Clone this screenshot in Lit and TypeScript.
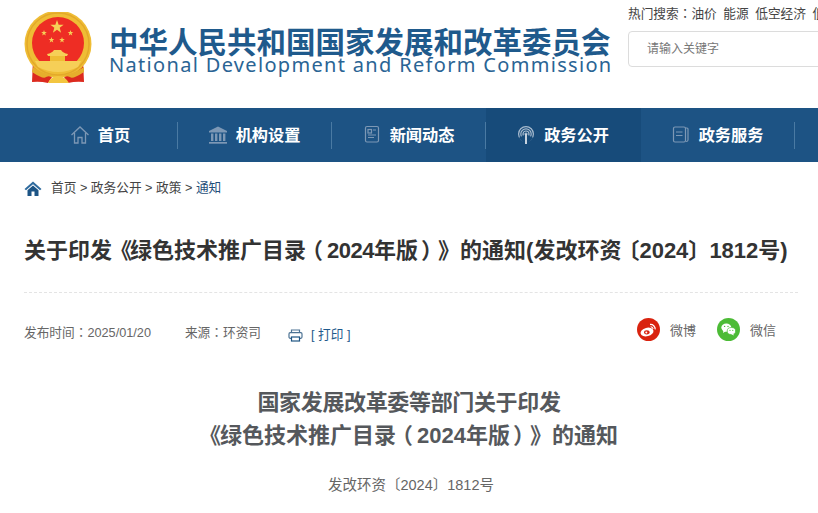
import { LitElement, html, css, svg } from "lit";
import { customElement } from "lit/decorators.js";

const star = (cx: number, cy: number, r: number, rot = 0) => {
  const pts: string[] = [];
  for (let i = 0; i < 10; i++) {
    const rad = i % 2 ? r * 0.4 : r;
    const a = -Math.PI / 2 + (i * Math.PI) / 5 + rot;
    pts.push(`${(cx + rad * Math.cos(a)).toFixed(2)},${(cy + rad * Math.sin(a)).toFixed(2)}`);
  }
  return svg`<polygon points=${pts.join(" ")} fill="#f6cf57"/>`;
};

const emblem = html`<svg class="emblem" width="70" height="74" viewBox="0 0 70 74">
  <path d="M9 48 L8 70 Q16 69 24 71 L30 62 H38 L44 71 Q52 69 60 70 L59 48 Z" fill="#dc2a1f"/>
  <circle cx="34" cy="32" r="33.5" fill="#efbd35"/>
  <circle cx="34" cy="32" r="31" fill="none" stroke="#e3a92a" stroke-width="1.5"/>
  <circle cx="34" cy="31" r="26" fill="#ee2d24"/>
  ${star(33, 15, 7)}${star(20, 21, 3)}${star(46.5, 21, 3)}${star(27.5, 28, 3)}${star(38, 28, 3)}
  <path d="M23 42 Q28 41 30 38 H37 Q39 41 44 42 L43 44 H24 Z" fill="#f6cf57"/>
  <rect x="26" y="44" width="15" height="5" fill="#efbd35"/>
  <path d="M11 49 H57 L54 55 Q44 60 34 60 Q24 60 14 55 Z" fill="#f6cf57"/>
  <path d="M9 55 Q34 72 60 55 L60 60 Q48 68 46 65 Q34 60 22 65 Q20 68 8 60 Z" fill="#e6ae2c"/>
  <path d="M24 71 Q27 64 34 64 Q41 64 45 71 Z" fill="#f3c640"/>
</svg>`;

const homeIcon = html`<svg class="ni" width="20" height="20" viewBox="0 0 20 20" fill="none" stroke="#7d98b5" stroke-width="1.3">
  <path d="M1.5 10 L10 2 L18.5 10"/><path d="M4.5 8 V18 H8 V12.5 H12 V18 H15.5 V8"/></svg>`;
const bankIcon = html`<svg class="ni" width="20" height="20" viewBox="0 0 20 20" fill="#7d98b5">
  <path d="M10 1.5 L19 6 V7.5 H1 V6 Z"/><rect x="3" y="8.5" width="2.4" height="7.5"/><rect x="7" y="8.5" width="2.4" height="7.5"/><rect x="11" y="8.5" width="2.4" height="7.5"/><rect x="15" y="8.5" width="2.4" height="7.5"/><rect x="1" y="17" width="18" height="1.7"/></svg>`;
const newsIcon = html`<svg class="ni" width="20" height="20" viewBox="0 0 20 20" fill="none" stroke="#7d98b5" stroke-width="1.2">
  <rect x="3.5" y="1.5" width="13" height="15.5" rx="1.5"/><rect x="6" y="4.5" width="3.5" height="3.5"/><path d="M11 5 H14 M6 10 H14 M6 12.5 H12"/></svg>`;
const signalIcon = html`<svg class="ni" width="20" height="20" viewBox="0 0 20 20" fill="none" stroke="#a9bccf" stroke-width="1.2">
  <circle cx="10" cy="9" r="7.4"/><circle cx="10" cy="9" r="5.2"/><circle cx="10" cy="9" r="3"/><circle cx="10" cy="9" r="1" fill="#a9bccf"/><path d="M2.5 13 L10 9 L17.5 13 L10 20 Z" fill="#174b7a" stroke="none"/><path d="M10 9 V19" stroke-width="1.8" stroke="#dbe3ea"/></svg>`;
const bookIcon = html`<svg class="ni" width="20" height="20" viewBox="0 0 20 20" fill="none" stroke="#7d98b5" stroke-width="1.2">
  <rect x="2.5" y="2" width="12" height="15" rx="1.5"/><path d="M14.5 3 H16 Q17 3 17 4 V15 Q17 16.5 15 16.5"/><path d="M5 7 H11.5 M5 10.5 H11.5"/></svg>`;

const crumbHome = html`<svg class="crumb-home" width="18" height="15" viewBox="0 0 18 15">
  <path d="M9 0.5 L0.5 8 L2 9.3 L9 3.2 L16 9.3 L17.5 8 Z" fill="#2f6b9e"/><path d="M3.5 9.3 L9 4.6 L14.5 9.3 V15 H10.5 V10.5 H7.5 V15 H3.5 Z" fill="#1c5485"/></svg>`;
const printIcon = html`<svg class="print-ic" width="15" height="13" viewBox="0 0 15 13" fill="none" stroke="#4d7394" stroke-width="1.2">
  <path d="M3.5 3.5 V1 H11.5 V3.5"/><rect x="1" y="3.7" width="13" height="5.6" rx="1.2"/><rect x="3.5" y="8" width="8" height="4" fill="#fff" stroke="#1f5583"/></svg>`;
const weiboIcon = html`<svg width="23" height="23" viewBox="0 0 23 23"><circle cx="11.5" cy="11.5" r="11.5" fill="#d9230f"/>
  <ellipse cx="10" cy="14" rx="6.6" ry="4.2" fill="#fff" transform="rotate(-14 10 14)"/><ellipse cx="9.8" cy="14.3" rx="2.8" ry="2.1" fill="#d9230f"/><circle cx="9.3" cy="14.5" r="1" fill="#fff"/>
  <path d="M13 6.5 A4.6 4.6 0 0 1 18.2 11.4" fill="none" stroke="#fff" stroke-width="1.3"/><path d="M13.6 8.8 A2.3 2.3 0 0 1 16 11" fill="none" stroke="#fff" stroke-width="1.1"/></svg>`;
const wechatIcon = html`<svg width="23" height="23" viewBox="0 0 23 23"><circle cx="11.5" cy="11.5" r="11.5" fill="#4cbb36"/>
  <ellipse cx="9.3" cy="9.6" rx="5" ry="4.2" fill="#fff"/><path d="M6.5 12 L6 15 L9 13 Z" fill="#fff"/><circle cx="7.6" cy="8.4" r=".7" fill="#4cbb36"/><circle cx="11" cy="8.4" r=".7" fill="#4cbb36"/>
  <ellipse cx="14.4" cy="13" rx="4.2" ry="3.5" fill="#fff" stroke="#4cbb36" stroke-width=".7"/><path d="M16 15.6 L17 17.5 L14.4 16.2 Z" fill="#fff"/><circle cx="13" cy="12.3" r=".6" fill="#4cbb36"/><circle cx="15.8" cy="12.3" r=".6" fill="#4cbb36"/></svg>`;

const navItems = [
  { t: "首页", i: homeIcon },
  { t: "机构设置", i: bankIcon },
  { t: "新闻动态", i: newsIcon },
  { t: "政务公开", i: signalIcon, active: true },
  { t: "政务服务", i: bookIcon },
];

const colon = html`<span class="tc">：</span>`;
const titleMid = html`<span class="lq">《</span>绿色技术推广目录<span class="lp">（</span><span class="n">2024</span>年版<span class="rp">）</span>》的通知`;

@customElement("app-root")
export class AppRoot extends LitElement {
  static styles = css`
    :host {
      display: block;
      width: 818px;
      height: 513px;
      overflow: hidden;
      background: #fff;
      font-family: "Liberation Sans", "Noto Sans CJK SC", sans-serif;
      color: #333;
    }
    .tc { font-family: "Noto Sans CJK TC", sans-serif; line-height: 0; }
    .lq { margin-left: -2px; margin-right: -2px; }
    .lp { margin-left: -5px; margin-right: 4px; }
    .rp { margin-left: 3px; margin-right: 6px; }
    .n { letter-spacing: -.5px; }
    .lb { margin-left: -4px; }
    .rb { margin-right: -1px; }
    .head { height: 108px; display: flex; padding-left: 24px; box-sizing: border-box; }
    .emblem { margin-top: 12px; flex: none; }
    .brand { margin-left: 15px; width: 519px; flex: none; padding-top: 23px; }
    .cn { font-size: 29.5px; line-height: 34px; font-weight: 700; color: #1f5a8c; white-space: nowrap; font-family: "Noto Sans CJK SC", sans-serif; }
    .en { font-size: 20px; line-height: 20px; letter-spacing: 1.32px; color: #2a6494; white-space: nowrap; margin-top: -2px; font-family: "Noto Sans", sans-serif; }
    .right { flex: none; width: 300px; padding-top: 6px; }
    .hot { font-size: 12.7px; line-height: 16px; color: #444; white-space: nowrap; }
    .hot .w { margin-right: 3px; }
    .search { margin-top: 9px; height: 36px; box-sizing: border-box; border: 1px solid #dcdcdc; border-radius: 4px; font-size: 12px; line-height: 34px; padding-left: 18px; color: #777; }
    nav { height: 54px; background: #1d5384; display: flex; padding-left: 24px; }
    .item { width: 154px; flex: none; box-sizing: border-box; padding-right: 2px; display: flex; align-items: center; justify-content: center; gap: 8px; position: relative; color: #fff; font-size: 16.2px; font-weight: 700; white-space: nowrap; font-family: "Noto Sans CJK SC", sans-serif; }
    .item span { margin-top: -2px; }
    .item::after { content: ""; position: absolute; right: 0; top: 14px; height: 27px; width: 1px; background: #4a7aa3; }
    .item.active { background: #174b7a; width: 155px; }
    .item.active::after { display: none; }
    .ni { flex: none; }
    .crumb { display: flex; align-items: center; padding: 18px 0 0 24px; height: 17px; font-size: 12.7px; line-height: 17px; color: #444; white-space: pre; }
    .crumb-home { margin-right: 9px; }
    .crumb b { font-weight: 400; color: #1f4f7a; }
    h1 { margin: 38px 0 0 24px; font-size: 22px; line-height: 32px; font-weight: 700; color: #333; white-space: nowrap; }
    .rule { margin: 25px 20px 0 24px; border-top: 1px dashed #e4e4e4; }
    .meta { display: flex; align-items: center; margin: 23px 0 0 24px; height: 30px; font-size: 12.7px; color: #666; position: relative; }
    .src { margin-left: 34px; }
    .print-ic { margin-left: 27px; margin-top: 8px; }
    .print { margin-left: 8px; color: #1f5a8c; margin-top: 4px; }
    .share { margin-left: auto; margin-right: 42px; display: flex; gap: 21px; margin-top: -3px; font-size: 13px; }
    .share span { display: flex; align-items: center; gap: 10px; width: 59px; }
    .share svg { flex: none; }
    h2 { margin: 40px 0 0; text-align: center; font-size: 22px; line-height: 33px; font-weight: 700; color: #55585c; }
    h2 .lq { margin-left: -1px; margin-right: -1px; }
    h2 .n { letter-spacing: 0; }
    h2 .tight { letter-spacing: -.35px; }
    .doc { margin-top: 24px; padding-left: 4px; text-align: center; font-size: 14.5px; line-height: 18px; color: #666; }
  `;
  render() {
    return html`
      <div class="head">
        ${emblem}
        <div class="brand">
          <div class="cn">中华人民共和国国家发展和改革委员会</div>
          <div class="en">National Development and Reform Commission</div>
        </div>
        <div class="right">
          <div class="hot">热门搜索${colon}<span class="w">油价</span> <span class="w">能源</span> <span class="w">低空经济</span> <span class="w">低碳</span></div>
          <div class="search">请输入关键字</div>
        </div>
      </div>
      <nav>
        ${navItems.map((n) => html`<div class="item ${n.active ? "active" : ""}">${n.i}<span>${n.t}</span></div>`)}
      </nav>
      <div class="crumb">${crumbHome}首页 &gt; 政务公开 &gt; 政策 &gt; <b>通知</b></div>
      <h1>关于印发${titleMid}(发改环资<span class="lb">〔</span>2024<span class="rb">〕</span>1812号)</h1>
      <div class="rule"></div>
      <div class="meta">
        <span>发布时间${colon}2025/01/20</span>
        <span class="src">来源${colon}环资司</span>
        ${printIcon}
        <span class="print">[ 打印 ]</span>
        <div class="share">
          <span>${weiboIcon}微博</span>
          <span>${wechatIcon}微信</span>
        </div>
      </div>
      <h2><span class="tight">国家发展改革委等部门关于印发</span><br />${titleMid}</h2>
      <div class="doc">发改环资〔2024〕1812号</div>
    `;
  }
}
